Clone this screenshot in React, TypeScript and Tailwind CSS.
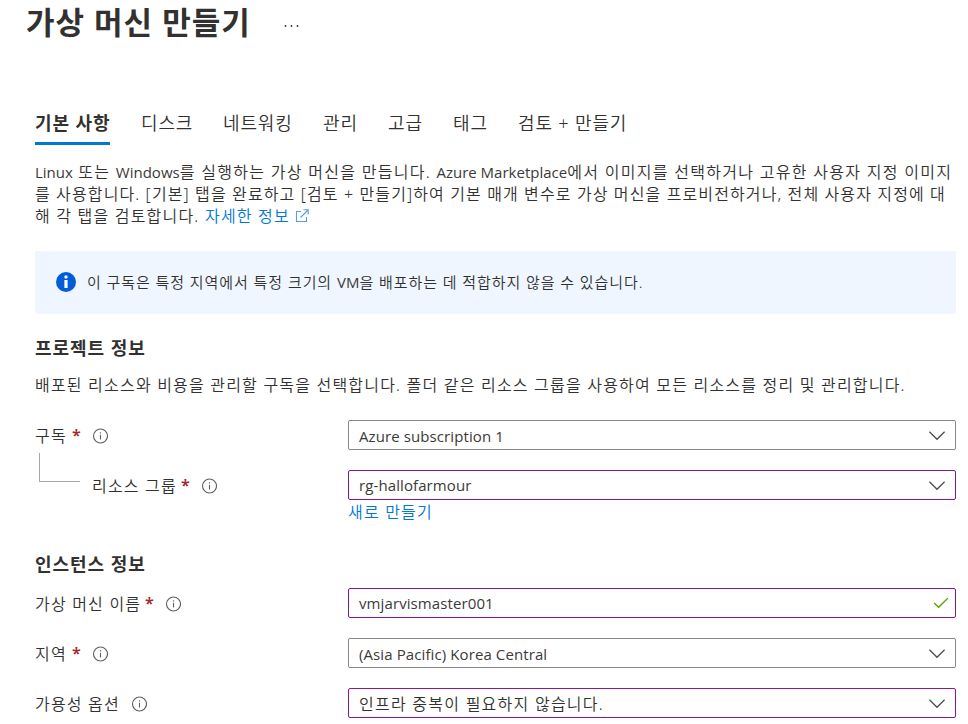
import type { ReactNode } from "react";

function InfoIcon() {
  return (
    <svg className="h-4 w-4 shrink-0" viewBox="0 0 16 16" fill="none">
      <circle cx="8.5" cy="8" r="7" stroke="#605e5c" strokeWidth="1.1" />
      <path d="M8.5 6.8V11.5" stroke="#605e5c" strokeWidth="1.1" />
      <path d="M8.5 4.3V5.5" stroke="#605e5c" strokeWidth="1.2" />
    </svg>
  );
}

function Chevron() {
  return (
    <svg className="h-4 w-4 shrink-0" viewBox="0 0 16 16" fill="none">
      <path d="M0.4 4.8L8 12.3L15.6 4.8" stroke="#4a4a4a" strokeWidth="1.3" />
    </svg>
  );
}

function Check() {
  return (
    <svg className="h-4 w-4 shrink-0" viewBox="0 0 16 16" fill="none">
      <path d="M1.2 8L5.6 12.3L14.8 3.2" stroke="#57a300" strokeWidth="1.3" />
    </svg>
  );
}

/* Latin run inside Korean text */
function L({ children }: { children: ReactNode }) {
  return <span className="font-['Open_Sans'] text-[15px] font-normal tracking-[0px] text-[#3b3a39]">{children}</span>;
}

function Label({ text, required, width, className = "" }: { text: string; required?: boolean; width: string; className?: string }) {
  return (
    <div className={`flex h-[30px] items-center pt-0.5 ${className}`}>
      <span className={`${width} whitespace-nowrap`}>{text}</span>
      {required && <span className="-mt-0.5 w-[20px] text-[16px] font-semibold leading-5 text-[#a4262c]">*</span>}
      <InfoIcon />
    </div>
  );
}

function Field({ children, purple, check, korean }: { children: ReactNode; purple?: boolean; check?: boolean; korean?: boolean }) {
  return (
    <div
      className={`flex h-[30px] w-[608px] items-center justify-between rounded-[2px] border pl-2.5 ${check ? "pr-1.5" : "pr-2.5"} ${purple ? "border-[#881798]" : "border-[#8a8886]"}`}
    >
      <span className={`whitespace-nowrap ${korean ? "pt-0.5 tracking-[1.25px]" : "font-['Open_Sans'] text-[15px] font-normal tracking-[0.1px] text-[#3b3a39] " + (purple ? "pb-px" : "pt-px")}`}>{children}</span>
      {check ? <Check /> : <Chevron />}
    </div>
  );
}

const tabs = [
  { label: "디스크", width: "w-[82px]" },
  { label: "네트워킹", width: "w-[100px]" },
  { label: "관리", width: "w-[65px]" },
  { label: "고급", width: "w-[65px]" },
  { label: "태그", width: "w-[65px]" },
  { label: "검토 + 만들기", width: "w-[120px]" },
];

export default function App() {
  return (
    <div className="h-[724px] w-[968px] overflow-hidden bg-white pl-[35px] font-['Noto_Sans','Noto_Sans_CJK_KR',sans-serif] text-[16px] leading-[22px] font-[350] tracking-[1.2px] text-[#323130]">
      <header className="-ml-[9px] flex h-[45px] items-center">
        <h1 className="-mt-px w-[257px] whitespace-nowrap text-[31px] font-semibold leading-[44px] tracking-[1px]">가상 머신 만들기</h1>
        <svg className="mt-1.5 h-1 w-4" viewBox="0 0 16 4" fill="#323130">
          <circle cx="2.5" cy="2" r="0.9" />
          <circle cx="8.5" cy="2" r="0.9" />
          <circle cx="14.5" cy="2" r="0.9" />
        </svg>
      </header>

      <nav className="mt-[57px] flex h-[43px] text-[18px] leading-[42px] tracking-[0.85px] whitespace-nowrap">
        <div className="mr-[31px] w-[75px] border-b-[3px] border-[#0078d4] font-semibold tracking-[0.9px]">기본 사항</div>
        {tabs.map((t) => (
          <div key={t.label} className={t.width}>{t.label}</div>
        ))}
      </nav>

      <p className="mt-[16px] whitespace-nowrap">
        <span className="block tracking-[1.3px]"><L>Linux</L> 또는 <L>Windows</L>를 실행하는 가상 머신을 만듭니다. <L>Azure Marketplace</L>에서 이미지를 선택하거나 고유한 사용자 지정 이미지</span>
        <span className="block tracking-[1.12px]">를 사용합니다. [기본] 탭을 완료하고 [검토 + 만들기]하여 기본 매개 변수로 가상 머신을 프로비전하거나, 전체 사용자 지정에 대</span>
        <span className="flex items-center">
          <span className="w-[170px]">해 각 탭을 검토합니다.</span>
          <a className="flex items-center text-[#0078d4]">
            <span className="w-[90px]">자세한 정보</span>
            <svg className="h-[14px] w-[14px]" viewBox="0 0 14 14" fill="none" stroke="#5b9be0" strokeWidth="1.1">
              <path d="M6 2.5H1.5V12.5H11.5V8" />
              <path d="M8.5 0.8H13.2V5.5M13 1L5.5 8.5" />
            </svg>
          </a>
        </span>
      </p>

      <section className="mt-[24px] flex h-[63px] w-[921px] items-center rounded-[2px] bg-[#eff6ff] pb-px pl-[21px]">
        <svg className="h-5 w-5" viewBox="0 0 20 20">
          <circle cx="10" cy="10" r="10" fill="#015cda" />
          <circle cx="10" cy="5" r="1.7" fill="white" />
          <path d="M8.4 8H11.6V16H8.4Z" fill="white" />
        </svg>
        <span className="ml-[11px] whitespace-nowrap text-[15px] tracking-[0.93px]">이 구독은 특정 지역에서 특정 크기의 <L>VM</L>을 배포하는 데 적합하지 않을 수 있습니다.</span>
      </section>

      <h2 className="mt-[23px] text-[18px] font-semibold tracking-[0.95px]">프로젝트 정보</h2>
      <p className="mt-[15px] whitespace-nowrap">배포된 리소스와 비용을 관리할 구독을 선택합니다. 폴더 같은 리소스 그룹을 사용하여 모든 리소스를 정리 및 관리합니다.</p>

      <div className="mt-[24px] grid grid-cols-[313px_608px] gap-y-5">
        <Label text="구독" required width="w-[37px]" />
        <Field>Azure subscription 1</Field>
        <div className="flex">
          <div className="-mt-[17px] ml-1 h-[29px] w-[41px] border-b border-l border-[#a6a6a6]" />
          <Label text="리소스 그룹" required width="w-[89px]" className="ml-3" />
        </div>
        <Field purple>rg-hallofarmour</Field>
      </div>
      <a className="ml-[313px] block w-[120px] pt-[1px] text-[#0078d4]">새로 만들기</a>

      <h2 className="mt-[30px] text-[18px] font-semibold tracking-[0.95px]">인스턴스 정보</h2>
      <div className="mt-[13px] grid grid-cols-[313px_608px] gap-y-5">
        <Label text="가상 머신 이름" required width="w-[110px]" />
        <Field purple check>vmjarvismaster001</Field>
        <Label text="지역" required width="w-[37px]" />
        <Field>(Asia Pacific) Korea Central</Field>
        <Label text="가용성 옵션" width="w-[96px]" />
        <Field purple korean>인프라 중복이 필요하지 않습니다.</Field>
      </div>
    </div>
  );
}
